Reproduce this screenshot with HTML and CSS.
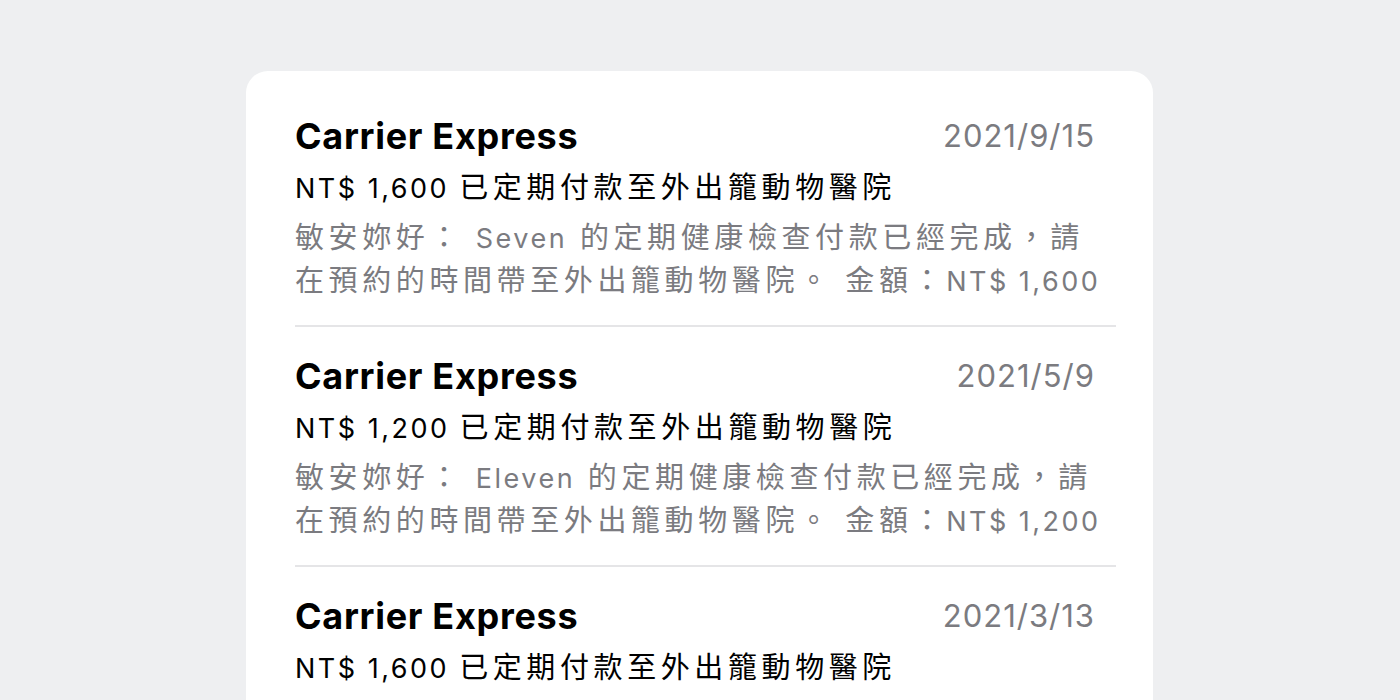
FILE: index.html
```html
<!DOCTYPE html>
<html lang="zh-Hant">
<head>
<meta charset="utf-8">
<title>Carrier Express</title>
<link rel="stylesheet" href="styles.css">
</head>
<body>
<main class="page">
  <section class="card">
    <article class="item">
      <header class="item-head">
        <h2 class="sender">Carrier Express</h2>
        <time class="date">2021/9/15</time>
      </header>
      <p class="subject"><span class="lat">NT$ 1,600 </span>已定期付款至外出籠動物醫院</p>
      <p class="body">敏安妳好： <span class="lat">Seven</span> 的定期健康檢查付款已經完成，請在預約的時間帶至外出籠動物醫院。 金額：<span class="lat">NT$ 1,600</span></p>
    </article>
    <article class="item">
      <header class="item-head">
        <h2 class="sender">Carrier Express</h2>
        <time class="date">2021/5/9</time>
      </header>
      <p class="subject"><span class="lat">NT$ 1,200 </span>已定期付款至外出籠動物醫院</p>
      <p class="body">敏安妳好： <span class="lat">Eleven</span> 的定期健康檢查付款已經完成，請在預約的時間帶至外出籠動物醫院。 金額：<span class="lat">NT$ 1,200</span></p>
    </article>
    <article class="item">
      <header class="item-head">
        <h2 class="sender">Carrier Express</h2>
        <time class="date">2021/3/13</time>
      </header>
      <p class="subject"><span class="lat">NT$ 1,600 </span>已定期付款至外出籠動物醫院</p>
      <p class="body">敏安妳好： <span class="lat">Seven</span> 的定期健康檢查付款已經完成，請在預約的時間帶至外出籠動物醫院。 金額：<span class="lat">NT$ 1,600</span></p>
    </article>
  </section>
</main>
</body>
</html>
```

FILE: styles.css
```css
html, body {
  margin: 0;
  padding: 0;
  background: #eeeff1;
  height: 100%;
  overflow: hidden;
}

body {
  font-family: Inter, "Noto Sans CJK TC", sans-serif;
  color: #000;
}

.page {
  display: flex;
  justify-content: center;
  padding-top: 71px;
}

.card {
  width: 907px;
  margin-left: -1px;
  background: #fff;
  border-radius: 22px;
  padding: 39px 37px 0 49px;
  box-sizing: border-box;
}

.item {
  padding: 0 0 23px 0;
  border-bottom: 2px solid #e5e5e7;
}

.item + .item {
  padding-top: 23px;
}

.item-head {
  display: flex;
  justify-content: space-between;
  align-items: center;
  height: 52px;
  padding-right: 21px;
}

.sender {
  margin: 0;
  font-size: 36px;
  font-weight: 700;
  letter-spacing: 0.7px;
  line-height: 52px;
}

.date {
  font-size: 31px;
  letter-spacing: 1px;
  color: #7b7b80;
  line-height: 52px;
}

.subject,
.body {
  margin: 0;
  font-size: 29px;
  letter-spacing: 4.6px;
  padding-right: 8px;
}

.subject {
  line-height: 52px;
}

.body {
  margin-top: 2px;
  line-height: 43px;
  color: #7b7b80;
}

.lat {
  font-size: 27px;
  line-height: 1;
  letter-spacing: 2.5px;
}
```
